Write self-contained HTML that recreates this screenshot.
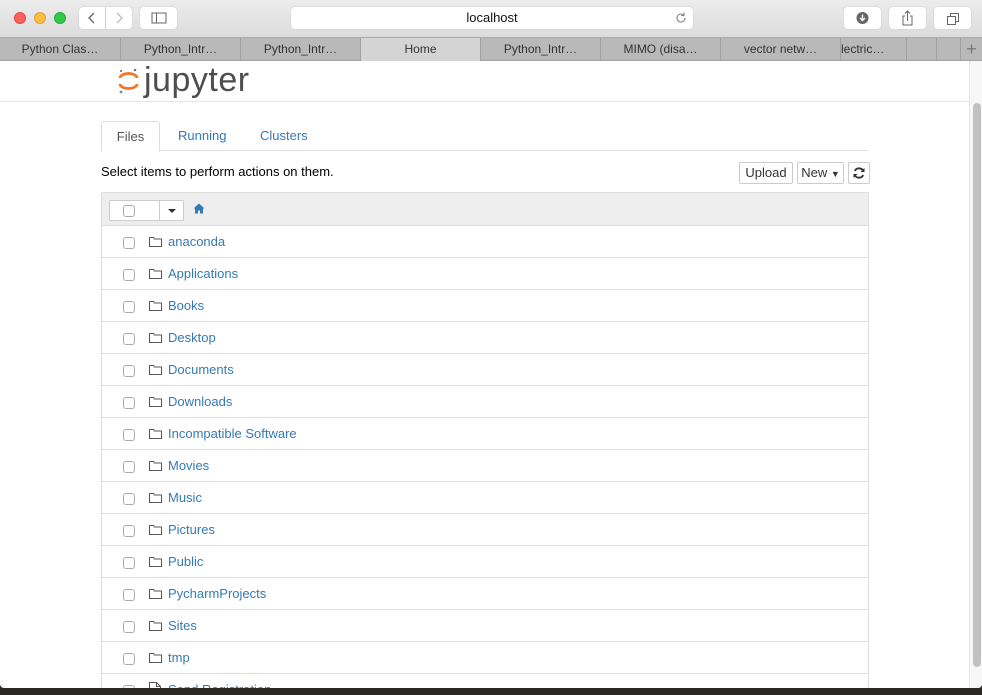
<!DOCTYPE html>
<html><head><meta charset="utf-8"><style>
*{box-sizing:border-box;margin:0;padding:0}
body{width:982px;height:695px;overflow:hidden;background:#2a2622;font-family:"Liberation Sans",Arial,sans-serif;position:relative}
.win{position:absolute;left:0;top:0;width:982px;height:688px;background:#fff;border-radius:0 0 4px 4px;overflow:hidden}
.toolbar{position:absolute;left:0;top:0;width:982px;height:37px;background:linear-gradient(#ececec,#dcdcdc)}
.dot{position:absolute;top:12px;width:12px;height:12px;border-radius:50%}
.btn{position:absolute;background:#fff;border-radius:4px;box-shadow:0 0 0 .5px #d0d0d0}
.tabs{position:absolute;left:0;top:37px;width:982px;height:24px;background:#b9b9b9;border-top:1px solid #a9a9a9;border-bottom:1px solid #a3a3a3}
.tab{position:absolute;top:0;height:23px;border-right:1px solid #a0a0a0;font-size:12px;color:#333;text-align:center;line-height:22px;white-space:nowrap;overflow:hidden}
.hdr{position:absolute;left:0;top:61px;width:969px;height:41px;border-bottom:1px solid #e7e7e7}
.scroll{position:absolute;left:969px;top:61px;width:13px;height:627px;background:#f7f7f7;border-left:1px solid #e5e5e5}
.thumb{position:absolute;left:3px;top:42px;width:8px;height:564px;background:#c1c1c1;border-radius:4px}
.ntabs{position:absolute;left:101px;top:121px;width:767px;height:30px;border-bottom:1px solid #ddd}
.nt{position:absolute;top:0;height:30px;line-height:30px;font-size:13px;color:#337ab7}
.files{position:absolute;left:101px;top:192px;width:768px;height:520px;border:1px solid #ddd;border-radius:2px}
.lh{height:33px;background:#eee;border-bottom:1px solid #ddd;position:relative}
.row{height:32px;border-bottom:1px solid #ddd;position:relative}
.cb{position:absolute;left:21px;top:11px;width:12px;height:12px;border:1px solid #aaa;border-radius:3px;background:#fff}
.fold{position:absolute;left:47px;top:10px}
.nm{position:absolute;left:66px;top:8px;font-size:13px;color:#337ab7}
.b{position:absolute;top:162px;height:22px;border:1px solid #ccc;border-radius:2px;background:#fff;font-size:13px;color:#333;line-height:20px;text-align:center}
</style></head><body>
<div class="win">
<div class="toolbar">
<div class="dot" style="left:14px;background:#fc605c;border:.5px solid #de4b46"></div>
<div class="dot" style="left:34px;background:#fdbc40;border:.5px solid #dea236"></div>
<div class="dot" style="left:54px;background:#34c84a;border:.5px solid #27aa35"></div>
<div class="btn" style="left:79px;top:7px;width:26px;height:22px;border-radius:4px 0 0 4px"><svg width="26" height="22"><path d="M15 6l-5 5 5 5" fill="none" stroke="#666" stroke-width="1.3"/></svg></div>
<div class="btn" style="left:106px;top:7px;width:26px;height:22px;border-radius:0 4px 4px 0"><svg width="26" height="22"><path d="M11 6l5 5-5 5" fill="none" stroke="#bbb" stroke-width="1.3"/></svg></div>
<div class="btn" style="left:140px;top:7px;width:37px;height:22px"><svg width="37" height="22"><rect x="12" y="6" width="14" height="10" fill="none" stroke="#666"/><line x1="16.5" y1="6" x2="16.5" y2="16" stroke="#666"/></svg></div>
<div class="btn" style="left:291px;top:7px;width:402px;height:22px;font-size:13px;line-height:22px;text-align:center;color:#111">localhost<svg style="position:absolute;right:5px;top:4px" width="14" height="14"><path d="M11 7a4 4 0 1 1-1.5-3.1" fill="none" stroke="#888" stroke-width="1.1"/><path d="M10 1.5v3h-3" fill="none" stroke="#888" stroke-width="1.1"/></svg></div>
<div class="btn" style="left:844px;top:7px;width:37px;height:22px"><svg width="37" height="22"><circle cx="18.5" cy="11" r="6" fill="#666"/><path d="M18.5 7.5v6M16 11l2.5 2.5 2.5-2.5" stroke="#fff" stroke-width="1.4" fill="none"/></svg></div>
<div class="btn" style="left:889px;top:7px;width:37px;height:22px"><svg width="37" height="22"><path d="M16 9h-2v9h9v-9h-2M18.5 14V4M16 6.5l2.5-2.5 2.5 2.5" fill="none" stroke="#666"/></svg></div>
<div class="btn" style="left:934px;top:7px;width:37px;height:22px"><svg width="37" height="22"><rect x="13.5" y="9.5" width="8" height="8" fill="none" stroke="#666"/><path d="M16.5 9.5v-3h8v8h-3" fill="none" stroke="#666"/></svg></div>
</div>
<div class="tabs">
<div class="tab" style="left:0;width:121px">Python Clas…</div>
<div class="tab" style="left:121px;width:120px">Python_Intr…</div>
<div class="tab" style="left:241px;width:120px">Python_Intr…</div>
<div class="tab" style="left:361px;width:120px;background:#d4d4d4">Home</div>
<div class="tab" style="left:481px;width:120px">Python_Intr…</div>
<div class="tab" style="left:601px;width:120px">MIMO (disa…</div>
<div class="tab" style="left:721px;width:120px">vector netw…</div>
<div class="tab" style="left:841px;width:66px;text-align:left">lectric…</div>
<div class="tab" style="left:907px;width:30px"></div>
<div class="tab" style="left:937px;width:24px"></div>
<div class="tab" style="left:961px;width:21px;border:none;font-size:18px;color:#777">+</div>
</div>
<div class="hdr">
<svg style="position:absolute;left:117px;top:5px" width="24" height="30"><path d="M3 12a8.5 4.5 0 0 1 17 0" fill="none" stroke="#f37726" stroke-width="2.8"/><path d="M3 18a8.5 4.5 0 0 0 17 0" fill="none" stroke="#f37726" stroke-width="2.8"/><circle cx="4" cy="5" r="1.1" fill="#777"/><circle cx="18" cy="4" r="1.3" fill="#777"/><circle cx="4" cy="26" r="1.4" fill="#888"/></svg>
<div style="position:absolute;left:144px;top:0px;font-size:34px;color:#4e4e4e;letter-spacing:.5px">jupyter</div>
</div>
<div class="ntabs">
<div style="position:absolute;left:0;top:0;width:59px;height:31px;border:1px solid #ddd;border-bottom-color:#fff;border-radius:3px 3px 0 0;background:#fff;font-size:13px;color:#555;text-align:center;line-height:29px">Files</div>
<div class="nt" style="left:77px">Running</div>
<div class="nt" style="left:159px">Clusters</div>
</div>
<div style="position:absolute;left:101px;top:164px;font-size:13px;color:#000">Select items to perform actions on them.</div>
<div class="b" style="left:739px;width:54px">Upload</div>
<div class="b" style="left:797px;width:47px">New <span style="font-size:9px">▼</span></div>
<div class="b" style="left:848px;width:22px"><svg width="20" height="20"><path d="M14.5 8.5A4.7 4.7 0 0 0 5.8 8M5.5 11.5a4.7 4.7 0 0 0 8.7.5" fill="none" stroke="#333" stroke-width="1.8"/><path d="M15.5 5v4h-4zM4.5 15v-4h4z" fill="#333"/></svg></div>
<div class="files">
<div class="lh">
<div style="position:absolute;left:7px;top:7px;width:75px;height:21px;border:1px solid #ccc;border-radius:2px;background:#fff"><div style="position:absolute;left:49px;top:0;width:1px;height:19px;background:#ccc"></div><div style="position:absolute;left:13px;top:4px;width:12px;height:12px;border:1px solid #aaa;border-radius:3px"></div><div style="position:absolute;left:58px;top:8px;border:4px solid transparent;border-top:4px solid #333"></div></div>
<svg style="position:absolute;left:91px;top:10px" width="12" height="11"><path d="M6 0.5L0.5 5.5h1.5v5h3v-3h2v3h3v-5h1.5z" fill="#337ab7"/></svg>
</div>
<div id="rows"></div>
</div>
<div class="scroll"><div class="thumb"></div></div>
</div>
<script>
var n=["anaconda","Applications","Books","Desktop","Documents","Downloads","Incompatible Software","Movies","Music","Pictures","Public","PycharmProjects","Sites","tmp","Send Registration"],h="";
n.forEach(function(x,i){var ic=i==14?'<svg class="fold" width="12" height="14" style="top:8px"><path d="M.5.5h7l4 4v9h-11z M7.5.5v4h4" fill="none" stroke="#555"/></svg>':'<svg class="fold" width="13" height="11"><path d="M.5 1.5h4l1 1.5h7v7.5h-12z" fill="none" stroke="#555"/></svg>';h+='<div class="row"><div class="cb"></div>'+ic+'<div class="nm">'+x+'</div></div>';});
document.getElementById("rows").innerHTML=h;
</script>
</body></html>
